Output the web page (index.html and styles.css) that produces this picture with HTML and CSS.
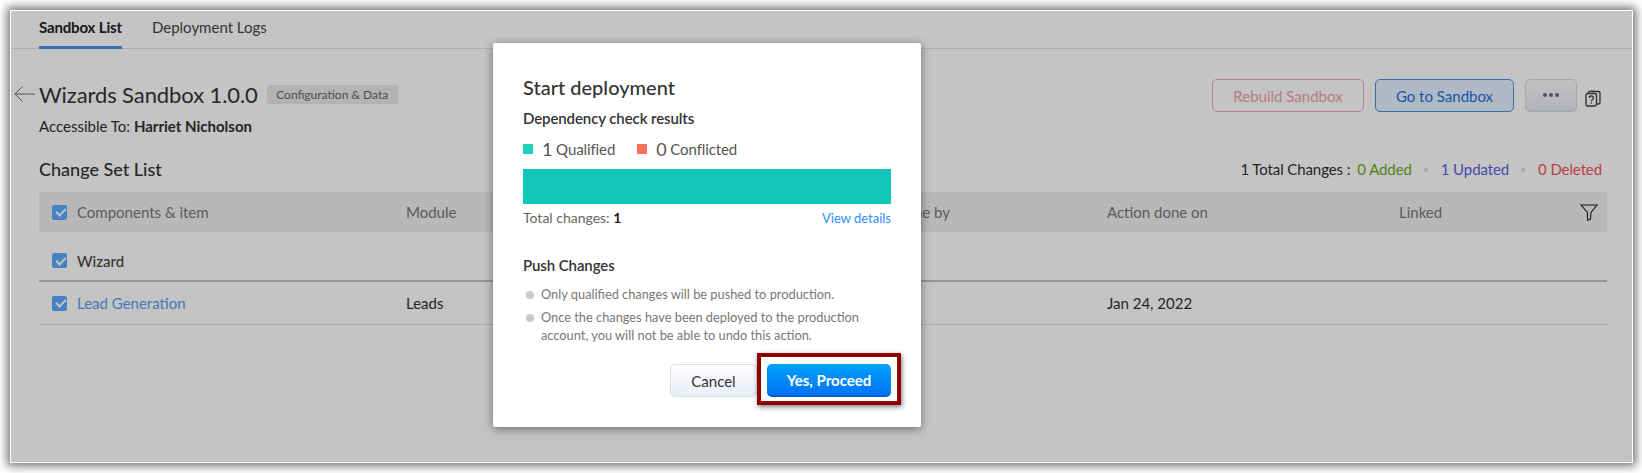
FILE: index.html
```html
<!DOCTYPE html>
<html lang="en">
  <head>
    <meta charset="UTF-8" />
    <meta name="viewport" content="width=device-width, initial-scale=1.0" />
    <title>Sandbox Deployment</title>
    <link rel="stylesheet" href="styles.css">
  </head>
  <body>
    <div class="frame">
      <nav class="tabs">
        <a class="tab active">Sandbox List</a>
        <a class="tab">Deployment Logs</a>
      </nav>

      <main class="content">
        <div class="head">
          <div class="head-left">
            <div class="title-row">
              <svg class="back" width="21" height="16" viewBox="0 0 21 16" fill="none" stroke="#6f6f6f" stroke-width="1">
                <path d="M21 8H1M8.500 .5L1 8l7.500 7.500" />
              </svg>
              <h1>Wizards Sandbox 1.0.0</h1>
              <span class="badge">Configuration &amp; Data</span>
            </div>
            <p class="access">Accessible To: <strong>Harriet Nicholson</strong></p>
          </div>
          <div class="actions">
            <button class="btn btn-rebuild">Rebuild Sandbox</button>
            <button class="btn btn-goto">Go to Sandbox</button>
            <button class="btn btn-more"><i></i><i></i><i></i></button>
            <svg class="help" width="16" height="17" viewBox="0 0 16 17" fill="none" stroke="#3c3c3c" stroke-width="1.300">
              <rect x="1" y="3.500" width="10.500" height="12.500" rx="1.500" />
              <path d="M3.500 3.300V2.500a1.300 1.300 0 0 1 1.300-1.300h4.500M6.500 1.500h7a1.500 1.500 0 0 1 1.500 1.500v9.500a1.500 1.500 0 0 1-1.500 1.500h-2" />
              <path d="M4.300 8a2 2 0 1 1 3 1.700c-.7.400-1 .8-1 1.500M6.300 12.300v1.200" />
            </svg>
          </div>
        </div>

        <div class="list-head">
          <h2>Change Set List</h2>
          <div class="summary">
            <span>1 Total Changes :</span>
            <span class="added">0 Added</span>
            <b class="sep"></b>
            <span class="updated">1 Updated</span>
            <b class="sep"></b>
            <span class="deleted">0 Deleted</span>
          </div>
        </div>

        <div class="row row-head">
          <div class="cell cell-name"><span class="check"></span>Components &amp; item</div>
          <div class="cell cell-module">Module</div>
          <div class="cell cell-by">Action done by</div>
          <div class="cell cell-on">Action done on</div>
          <div class="cell cell-linked">Linked</div>
          <svg class="filter" width="18" height="17" viewBox="0 0 18 17" fill="none" stroke="#1f1f1f" stroke-width="1.100">
            <path d="M1 1h16l-6 7.500-.5 6.500-3 1.200V8.500z" />
          </svg>
        </div>
        <div class="row row-group">
          <div class="cell cell-name"><span class="check"></span>Wizard</div>
        </div>
        <div class="row row-item">
          <div class="cell cell-name"><span class="check"></span><a class="link">Lead Generation</a></div>
          <div class="cell cell-module">Leads</div>
          <div class="cell cell-by"></div>
          <div class="cell cell-on">Jan 24, 2022</div>
        </div>
      </main>

      <div class="overlay"></div>

      <section class="modal">
        <h3>Start deployment</h3>
        <h4>Dependency check results</h4>
        <div class="legend">
          <span class="legend-item"><i class="dot dot-ok"></i><em>1</em> Qualified</span>
          <span class="legend-item"><i class="dot dot-bad"></i><em>0</em> Conflicted</span>
        </div>
        <div class="bar"></div>
        <div class="bar-foot">
          <span>Total changes: <strong>1</strong></span>
          <a class="details">View details</a>
        </div>
        <h4 class="push">Push Changes</h4>
        <ul class="notes">
          <li>Only qualified changes will be pushed to production.</li>
          <li>Once the changes have been deployed to the production account, you will not be able to undo this action.</li>
        </ul>
        <div class="modal-foot">
          <button class="btn btn-cancel">Cancel</button>
          <button class="btn btn-proceed">Yes, Proceed</button>
        </div>
      </section>
    </div>
  </body>
</html>
```

FILE: styles.css
```css
* {
  margin: 0;
  padding: 0;
  box-sizing: border-box;
}

html,
body {
  height: 100%;
  overflow: hidden;
}

body {
  background-color: #fff;
  color: #2f2f33;
  font-family: Lato, "Open Sans", sans-serif;
  font-size: 15px;
  padding: 10px 9px 10px 10px;
}

.frame {
  position: relative;
  height: 453px;
  background-color: #fff;
  border: 1px solid #fff;
  box-shadow: 0 0 9px 3px rgba(0, 0, 0, 0.55);
}

/* tabs */
.tabs {
  display: flex;
  gap: 30px;
  height: 38px;
  padding-left: 28px;
  border-bottom: 1px solid #dfe5ee;
}

.tab {
  height: 38px;
  padding-top: 7px;
  color: #444;
  font-size: 15px;
}

.tab.active {
  color: #222;
  font-weight: 700;
  letter-spacing: -0.15px;
  border-bottom: 3px solid #4a90e2;
}

/* page content */
.content {
  padding: 0 25px 0 28px;
}

.head {
  display: flex;
  justify-content: space-between;
  height: 106px;
}

.head-left {
  padding-top: 31px;
}

.title-row {
  position: relative;
  display: flex;
  align-items: center;
  gap: 9px;
  height: 28px;
}

.back {
  position: absolute;
  left: -25px;
  top: 6px;
}

h1 {
  font-size: 22px;
  font-weight: 400;
  letter-spacing: -0.1px;
  color: #333;
}

.badge {
  height: 19px;
  padding: 0 9.500px;
  border-radius: 3px;
  background-color: #e9e9e9;
  color: #666;
  font-size: 12px;
  line-height: 19px;
}

.access {
  margin-top: 9px;
  font-size: 15px;
  line-height: 18px;
}

.actions {
  display: flex;
  align-items: flex-start;
  gap: 11px;
  padding: 30px 6px 0 0;
}

.btn {
  height: 33px;
  border-radius: 5px;
  font-family: inherit;
  font-size: 15px;
}

.btn-rebuild {
  width: 152px;
  border: 1px solid #f08a96;
  background-color: #fff;
  color: #ed7f8c;
  opacity: 0.75;
}

.btn-goto {
  width: 139px;
  border: 1px solid #4a90e2;
  background-color: #e6f2ff;
  color: #1f6fe0;
}

.btn-more {
  display: flex;
  align-items: center;
  justify-content: center;
  gap: 2px;
  width: 52px;
  border: 1px solid #d9dce4;
  border-bottom-width: 2px;
  background: linear-gradient(#fbfbfd, #e8ebf3);
}

.btn-more i {
  width: 4px;
  height: 4px;
  border-radius: 50%;
  background-color: #6d6d6d;
}

.help {
  margin: 11px 0 0 -3px;
}

.list-head {
  display: flex;
  align-items: center;
  justify-content: space-between;
  height: 28px;
}

h2 {
  font-size: 18px;
  font-weight: 500;
  color: #333;
}

.summary {
  display: flex;
  align-items: center;
  padding-right: 5px;
  font-size: 15px;
  letter-spacing: -0.1px;
}

.added {
  margin-left: 7px;
  color: #6cab1a;
}

.updated {
  color: #5a5fe0;
}

.deleted {
  color: #f0505a;
}

.sep {
  width: 4px;
  height: 4px;
  margin: 2px 13px 0 12px;
  border-radius: 50%;
  background-color: #d9d9d9;
}

/* table */
.row {
  position: relative;
  display: flex;
  align-items: center;
}

.row-head {
  height: 40px;
  margin-top: 9px;
  background-color: #f0f0f0;
  color: #777;
}

.row-group {
  height: 50px;
  padding-top: 9px;
  border-bottom: 2px solid #c4c4c4;
}

.row-group .cell-name {
  font-weight: 500;
  color: #444;
}

.row-item {
  height: 43px;
  border-bottom: 1px solid #dedede;
}

.cell {
  flex: none;
}

.cell-name {
  display: flex;
  align-items: center;
  width: 367px;
  padding-left: 13px;
}

.cell-module {
  width: 444px;
}

.cell-by {
  width: 257px;
}

.cell-on {
  width: 292px;
}

.check {
  position: relative;
  width: 15px;
  height: 15px;
  margin-right: 10px;
  border-radius: 2px;
  background-color: #5ba8ff;
}

.check::after {
  content: "";
  position: absolute;
  left: 3.500px;
  top: 3.500px;
  width: 8px;
  height: 4px;
  border-left: 2px solid #fff;
  border-bottom: 2px solid #fff;
  transform: rotate(-45deg);
}

.link {
  color: #5b9cf0;
}

.filter {
  position: absolute;
  right: 9px;
  top: 12px;
}

/* dimmed layer and dialog */
.overlay {
  position: absolute;
  inset: 0;
  background-color: rgba(0, 0, 0, 0.23);
}

.modal {
  position: absolute;
  left: 482px;
  top: 32px;
  width: 428px;
  height: 384px;
  padding: 32px 30px 0;
  border-radius: 2px;
  background-color: #fff;
  box-shadow: 0 2px 10px rgba(0, 0, 0, 0.45);
}

h3 {
  font-size: 20px;
  font-weight: 500;
  line-height: 24px;
  color: #333;
}

h4 {
  margin-top: 9px;
  font-size: 15px;
  font-weight: 600;
  line-height: 20px;
  letter-spacing: -0.1px;
  color: #333;
}

.legend {
  display: flex;
  gap: 22px;
  height: 24px;
  margin-top: 9px;
  align-items: center;
  font-size: 15px;
  letter-spacing: -0.1px;
  color: #555;
}

.legend-item {
  display: flex;
  align-items: center;
  white-space: pre;
}

.legend-item em {
  font-size: 18px;
  font-style: normal;
}

.dot {
  width: 10px;
  height: 10px;
  margin-right: 9px;
}

.dot-ok {
  background-color: #1ed0c1;
}

.dot-bad {
  background-color: #ff6f5e;
}

.bar {
  height: 35px;
  margin-top: 8px;
  background-color: #10cbbc;
  background-image: linear-gradient(45deg, rgba(0, 0, 0, 0.07) 12.5%, transparent 12.5% 50%, rgba(0, 0, 0, 0.07) 50% 62.5%, transparent 62.5%);
  background-size: 4px 4px;
}

.bar-foot {
  display: flex;
  justify-content: space-between;
  align-items: baseline;
  margin-top: 6px;
  font-size: 14px;
  line-height: 16px;
  color: #666;
}

.bar-foot strong {
  color: #222;
}

.details {
  font-size: 13px;
  color: #2f8dff;
}

.push {
  margin-top: 29px;
}

.notes {
  list-style: none;
  margin-top: 10px;
  font-size: 12.800px;
  line-height: 18px;
  color: #777;
}

.notes li {
  position: relative;
  margin-bottom: 5px;
  padding-left: 18px;
}

.notes li::before {
  content: "";
  position: absolute;
  left: 3px;
  top: 6px;
  width: 8px;
  height: 8px;
  border-radius: 50%;
  background-color: #c9c9c9;
}

.modal-foot {
  display: flex;
  justify-content: flex-end;
  gap: 10px;
  margin-top: 20px;
}

.btn-cancel {
  width: 87px;
  border: 1px solid #d9dde8;
  background: linear-gradient(#fdfdff, #e9edf6);
  color: #333;
}

.btn-proceed {
  position: relative;
  width: 124px;
  border: none;
  border-bottom: 2px solid #0060cc;
  background: linear-gradient(#00a2fb, #0073f5);
  color: #fff;
  font-weight: 700;
}

/* annotation box drawn around the primary button */
.btn-proceed::after {
  content: "";
  position: absolute;
  inset: -11px -10px -10px -10px;
  border: 4px solid #8e0000;
  box-shadow: 1px 2px 5px rgba(0, 0, 0, 0.5);
}
```
